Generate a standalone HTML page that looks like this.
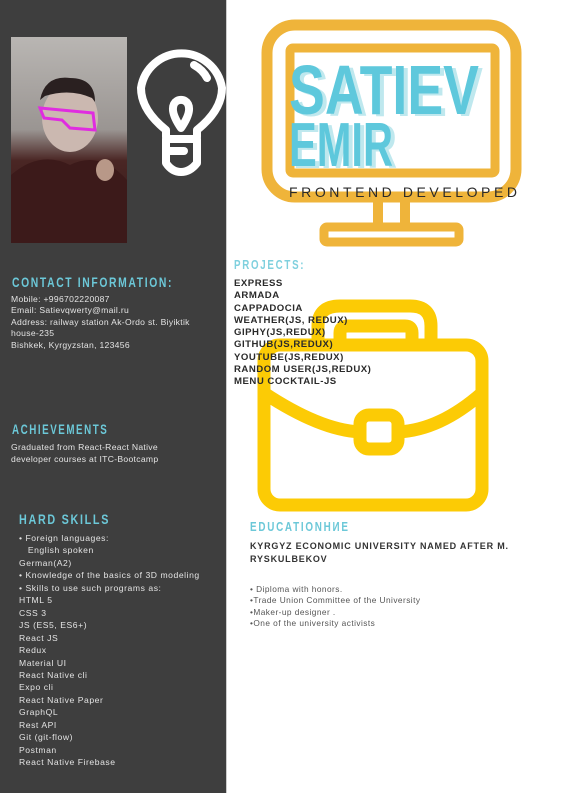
<!DOCTYPE html>
<html><head><meta charset="utf-8"><style>
*{margin:0;padding:0;box-sizing:border-box}
body{width:565px;height:800px;background:#fff;position:relative;overflow:hidden;font-family:"Liberation Sans","DejaVu Sans",sans-serif}
.side{position:absolute;left:0;top:0;width:227px;height:793px;background:#3e3e3e;border-right:1px solid #ccc}
.h{position:absolute;font-family:"Liberation Sans",sans-serif;font-weight:bold;color:#6cc8d8;letter-spacing:2.2px;white-space:nowrap;transform:scaleX(.74);transform-origin:0 0}
.t{position:absolute;color:#e4e4e4;font-size:8.6px;line-height:11.4px;white-space:nowrap;letter-spacing:.3px}
.p{position:absolute;left:234px;top:278px;font-size:9.6px;line-height:12.3px;font-weight:bold;color:#2a2a2a;letter-spacing:.5px;white-space:nowrap}
</style></head><body>
<div class="side"></div>
<svg style="position:absolute;left:0;top:0" width="565" height="800">
<defs><linearGradient id="ph" x1="0" y1="0" x2="0" y2="1"><stop offset="0" stop-color="#b9b6b3"/><stop offset=".45" stop-color="#9a9592"/><stop offset=".6" stop-color="#4a2624"/><stop offset="1" stop-color="#301818"/></linearGradient></defs>
<rect x="11" y="37" width="116" height="206" fill="url(#ph)"/>
<ellipse cx="70" cy="118" rx="28" ry="34" fill="#cbb8b0"/>
<path d="M40 100 Q45 75 70 78 Q95 78 95 102 L92 98 Q70 88 45 96Z" fill="#2a2020"/>
<path d="M11 175 Q40 150 70 165 Q100 150 127 180 L127 243 L11 243Z" fill="#3c1a1a"/>
<path d="M40 108 L93 113 L95 130 L70 128 L62 120 L44 118Z" fill="none" stroke="#e02ce0" stroke-width="3"/>
<ellipse cx="105" cy="170" rx="9" ry="11" fill="#b89888"/>
<g fill="none" stroke="#fff" stroke-width="8" stroke-linecap="round" stroke-linejoin="round">
<path d="M166 137 L166 130 Q141 110 141 88 A41 41 0 0 1 222 88 Q222 110 197 130 L197 137"/>
<path d="M181 128 Q170 112 174 104 A8 8 0 0 1 188 104 Q192 112 181 128"/>
<path d="M194 65 Q203 70 207 78"/>
<path d="M166 139 L197 139 L197 163 Q190 172 181 172 Q172 172 166 163 Z"/>
<path d="M166 151 L184 151"/>
</g>
<g fill="none" stroke="#efb43a" stroke-width="11" stroke-linejoin="round">
<rect x="267" y="25" width="249" height="172" rx="28"/>
<rect x="290" y="48" width="205" height="125" rx="3" stroke-width="9"/>
<path d="M378 200 L378 224 M405 200 L405 224" stroke-width="10"/>
<rect x="324" y="227" width="135" height="15" rx="3" stroke-width="9"/>
</g>
<g fill="none" stroke="#fccb05" stroke-width="13" stroke-linejoin="round">
<path d="M318 345 L318 326 Q318 306 340 306 L410 306 Q431 306 431 326 L431 345"/>
<path d="M340 345 L340 333 Q340 326 348 326 L405 326 Q412 326 412 333 L412 345"/>
<rect x="264" y="345" width="218" height="160" rx="16"/>
<path d="M264 393 Q320 430 360 432 M398 432 Q440 430 482 393"/>
<rect x="360" y="415" width="38" height="34" rx="9"/>
</g>
<text x="293" y="116" font-weight="bold" font-size="70" fill="#bfe8ee" textLength="190" lengthAdjust="spacingAndGlyphs">SATIEV</text>
<text x="289" y="114" font-weight="bold" font-size="70" fill="#5ec8dc" textLength="190" lengthAdjust="spacingAndGlyphs">SATIEV</text>
<text x="293" y="168" font-weight="bold" font-size="62" fill="#bfe8ee" textLength="104" lengthAdjust="spacingAndGlyphs">EMIR</text>
<text x="289" y="166" font-weight="bold" font-size="62" fill="#5ec8dc" textLength="104" lengthAdjust="spacingAndGlyphs">EMIR</text>
<text x="289" y="197" font-size="14" fill="#2a2a2a" textLength="228" lengthAdjust="spacing">FRONTEND DEVELOPED</text>
</svg>
<div class="h" style="left:12px;top:274px;font-size:14px">CONTACT INFORMATION:</div>
<div class="t" style="left:11px;top:294px">Mobile: +996702220087<br>Email: Satievqwerty@mail.ru<br>Address: railway station Ak-Ordo st. Biyiktik<br>house-235<br>Bishkek, Kyrgyzstan, 123456</div>
<div class="h" style="left:12px;top:421px;font-size:14px;transform:scaleX(.7)">ACHIEVEMENTS</div>
<div class="t" style="left:11px;top:441px;line-height:12px">Graduated from React-React Native<br>developer courses at ITC-Bootcamp</div>
<div class="h" style="left:19px;top:511px;font-size:14px;transform:scaleX(.77)">HARD SKILLS</div>
<div class="t" style="left:19px;top:532px;line-height:12.45px;letter-spacing:.55px">• Foreign languages:<br>&nbsp;&nbsp;&nbsp;English spoken<br>German(A2)<br>• Knowledge of the basics of 3D modeling<br>• Skills to use such programs as:<br>HTML 5<br>CSS 3<br>JS (ES5, ES6+)<br>React JS<br>Redux<br>Material UI<br>React Native cli<br>Expo cli<br>React Native Paper<br>GraphQL<br>Rest API<br>Git (git-flow)<br>Postman<br>React Native Firebase</div>
<div class="h" style="left:234px;top:258px;font-size:12.5px;color:#7fd0de;transform:scaleX(.78)">PROJECTS:</div>
<div class="p">EXPRESS<br>ARMADA<br>CAPPADOCIA<br>WEATHER(JS, REDUX)<br>GIPHY(JS,REDUX)<br>GITHUB(JS,REDUX)<br>YOUTUBE(JS,REDUX)<br>RANDOM USER(JS,REDUX)<br>MENU COCKTAIL-JS</div>
<div class="h" style="left:250px;top:520px;font-size:12.5px;color:#6cc8d8;transform:scaleX(.79)">EDUCATIONНИЕ</div>
<div class="p" style="left:250px;top:540px;font-size:9px;line-height:12.5px;color:#333;letter-spacing:.8px">KYRGYZ ECONOMIC UNIVERSITY NAMED AFTER M.<br>RYSKULBEKOV</div>
<div class="t" style="left:250px;top:584px;color:#555;font-size:8.3px;letter-spacing:.45px">• Diploma with honors.<br>•Trade Union Committee of the University<br>•Maker-up designer .<br>•One of the university activists</div>
</body></html>
